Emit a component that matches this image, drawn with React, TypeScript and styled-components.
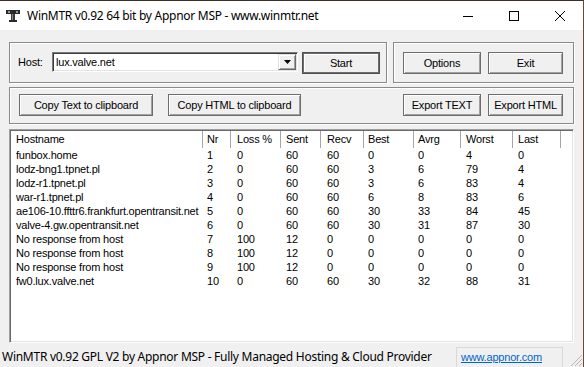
import React from 'react';
import styled, { createGlobalStyle } from 'styled-components';

const Global = createGlobalStyle`
  html, body { margin: 0; padding: 0; background: #f0f0f0; }
  body { width: 584px; height: 367px; overflow: hidden; }
`;

const Window = styled.div`
  width: 584px;
  height: 367px;
  box-sizing: border-box;
  border-top: 1px solid #3b2f28;
  border-right: 1px solid #6b4a33;
  background: #f0f0f0;
  display: flex;
  flex-direction: column;
  font-family: "Liberation Sans", Arial, sans-serif;
  font-size: 11px;
  letter-spacing: -0.2px;
  color: #000;
`;

const TitleBar = styled.div`
  height: 29px;
  flex: none;
  background: #fff;
  display: flex;
  align-items: center;
`;

const TitleIcon = styled.svg`
  width: 16px;
  height: 16px;
  margin-left: 5px;
  flex: none;
`;

const TitleText = styled.div`
  margin-left: 6px;
  flex: 1;
  font-family: "Noto Sans", "Open Sans", sans-serif;
  font-size: 12px;
  letter-spacing: -0.28px;
  color: #000;
`;

const CaptionButton = styled.div`
  width: 46px;
  height: 29px;
  display: flex;
  align-items: center;
  justify-content: center;
`;

const Content = styled.div`
  flex: 1;
  display: flex;
  flex-direction: column;
  padding: 0 9px;
  min-height: 0;
`;

const TopRow = styled.div`
  display: flex;
  gap: 6px;
  margin-top: 12px;
`;

const Group = styled.div<{ $w?: number; $h: number; $pt: number; $pl: number; $pr: number }>`
  box-sizing: border-box;
  ${(p) => (p.$w ? `width: ${p.$w}px;` : 'flex: 1;')}
  height: ${(p) => p.$h}px;
  border: 1px solid #8a8a8a;
  box-shadow: inset 1px 1px #ffffff, 1px 1px #ffffff;
  display: flex;
  align-items: flex-start;
  padding: ${(p) => `${p.$pt}px ${p.$pr}px 0 ${p.$pl}px`};
`;

const HostLabel = styled.div`
  width: 34px;
  height: 20px;
  line-height: 20px;
  flex: none;
`;

const Combo = styled.div`
  box-sizing: border-box;
  width: 246px;
  height: 20px;
  margin-right: 4px;
  background: #fff;
  border-style: solid;
  border-width: 1px;
  border-color: #7a7a7a #ffffff #ffffff #7a7a7a;
  box-shadow: inset 1px 1px #3c3c3c, inset -1px -1px #e3e3e3;
  display: flex;
  align-items: center;
  padding: 0 1px 0 3px;
`;

const ComboText = styled.div`
  flex: 1;
  line-height: 16px;
`;

const ComboArrow = styled.div`
  box-sizing: border-box;
  width: 18px;
  height: 16px;
  background: #f0f0f0;
  border-style: solid;
  border-width: 1px;
  border-color: #e3e3e3 #696969 #696969 #e3e3e3;
  box-shadow: inset 1px 1px #fff, inset -1px -1px #a0a0a0;
  display: flex;
  align-items: center;
  justify-content: center;
`;

const Button = styled.div<{ $w: number; $default?: boolean }>`
  box-sizing: border-box;
  width: ${(p) => p.$w}px;
  height: 22px;
  flex: none;
  background: #f0f0f0;
  border: 1px solid ${(p) => (p.$default ? '#505050' : '#6d6d6d')};
  box-shadow: ${(p) =>
    p.$default
      ? 'inset 1px 1px #6d6d6d, inset -1px -1px #6d6d6d, inset 2px 2px #fff'
      : 'inset 1px 1px #ffffff, inset -1px -1px #a0a0a0'};
  display: flex;
  align-items: center;
  justify-content: center;
  white-space: nowrap;
`;

const Gap = styled.div<{ $w: number }>`
  width: ${(p) => p.$w}px;
  flex: none;
`;

const Spacer = styled.div`
  flex: 1;
`;

const SecondRow = styled.div`
  margin-top: 4px;
  display: flex;
`;

const List = styled.div`
  margin-top: 5px;
  flex: 1;
  min-height: 0;
  box-sizing: border-box;
  background: #fff;
  border-style: solid;
  border-width: 1px;
  border-color: #a0a0a0 #ffffff #ffffff #a0a0a0;
  box-shadow: inset 1px 1px #696969, inset -1px -1px #e3e3e3;
  padding: 1px;
  overflow: hidden;
`;

const GridRow = styled.div<{ $cols: string; $h: number }>`
  display: grid;
  grid-template-columns: ${(p) => p.$cols};
  height: ${(p) => p.$h}px;
  line-height: ${(p) => p.$h}px;
`;

const HeaderCell = styled.div<{ $pad: number; $last?: boolean }>`
  box-sizing: border-box;
  padding-left: ${(p) => p.$pad}px;
  border-right: ${(p) => (p.$last ? 'none' : '1px solid #a6a6a6')};
  white-space: nowrap;
  overflow: hidden;
`;

const Cell = styled.div<{ $pad: number }>`
  box-sizing: border-box;
  padding-left: ${(p) => p.$pad}px;
  white-space: nowrap;
  overflow: hidden;
`;

const StatusBar = styled.div`
  height: 24px;
  flex: none;
  display: flex;
  align-items: flex-end;
`;

const StatusMain = styled.div`
  flex: 1;
  height: 20px;
  line-height: 20px;
  padding-left: 2px;
  white-space: nowrap;
  font-family: "Noto Sans", "Open Sans", sans-serif;
  font-size: 12px;
  letter-spacing: -0.27px;
`;

const StatusPanel = styled.div`
  box-sizing: border-box;
  width: 107px;
  height: 20px;
  line-height: 19px;
  border: 1px solid #d9d9d9;
  border-bottom: none;
  padding-left: 4px;
  white-space: nowrap;
`;

const Link = styled.span`
  color: #0066cc;
  text-decoration: underline;
`;

const Grip = styled.svg`
  width: 20px;
  height: 20px;
  flex: none;
`;

const COLS = [
  { label: 'Hostname', w: 192, pad: 5 },
  { label: 'Nr', w: 28, pad: 4 },
  { label: 'Loss %', w: 50, pad: 6 },
  { label: 'Sent', w: 40, pad: 5 },
  { label: 'Recv', w: 43, pad: 6 },
  { label: 'Best', w: 50, pad: 4 },
  { label: 'Avrg', w: 47, pad: 4 },
  { label: 'Worst', w: 52, pad: 5 },
  { label: 'Last', w: 48, pad: 5 },
];

const ROWS: (string | number)[][] = [
  ['funbox.home', 1, 0, 60, 60, 0, 0, 4, 0],
  ['lodz-bng1.tpnet.pl', 2, 0, 60, 60, 3, 6, 79, 4],
  ['lodz-r1.tpnet.pl', 3, 0, 60, 60, 3, 6, 83, 4],
  ['war-r1.tpnet.pl', 4, 0, 60, 60, 6, 8, 83, 6],
  ['ae106-10.ffttr6.frankfurt.opentransit.net', 5, 0, 60, 60, 30, 33, 84, 45],
  ['valve-4.gw.opentransit.net', 6, 0, 60, 60, 30, 31, 87, 30],
  ['No response from host', 7, 100, 12, 0, 0, 0, 0, 0],
  ['No response from host', 8, 100, 12, 0, 0, 0, 0, 0],
  ['No response from host', 9, 100, 12, 0, 0, 0, 0, 0],
  ['fw0.lux.valve.net', 10, 0, 60, 60, 30, 32, 88, 31],
];

const colTemplate = COLS.map((c) => `${c.w}px`).join(' ') + ' 1fr';

export default function App() {
  return (
    <>
      <Global />
      <Window>
        <TitleBar>
          <TitleIcon viewBox="0 0 16 16">
            <rect x="1" y="2" width="14" height="4" fill="#2a2a2a" />
            <rect x="3" y="3" width="2" height="2" fill="#9a9a9a" />
            <rect x="11" y="3" width="2" height="2" fill="#9a9a9a" />
            <rect x="6" y="6" width="4" height="6" fill="#3a3a3a" />
            <rect x="7" y="6" width="1" height="6" fill="#8a8a8a" />
            <rect x="4" y="12" width="8" height="2" fill="#2a2a2a" />
          </TitleIcon>
          <TitleText>WinMTR v0.92 64 bit by Appnor MSP - www.winmtr.net</TitleText>
          <CaptionButton>
            <svg width="10" height="10" viewBox="0 0 10 10">
              <line x1="0" y1="5.5" x2="10" y2="5.5" stroke="#000" strokeWidth="1" />
            </svg>
          </CaptionButton>
          <CaptionButton>
            <svg width="10" height="10" viewBox="0 0 10 10">
              <rect x="0.5" y="0.5" width="9" height="9" fill="none" stroke="#000" strokeWidth="1" />
            </svg>
          </CaptionButton>
          <CaptionButton>
            <svg width="10" height="10" viewBox="0 0 10 10">
              <path d="M0 0 L10 10 M10 0 L0 10" stroke="#000" strokeWidth="1" />
            </svg>
          </CaptionButton>
        </TitleBar>
        <Content>
          <TopRow>
            <Group $w={378} $h={41} $pt={9} $pl={8} $pr={6}>
              <HostLabel>Host:</HostLabel>
              <Combo>
                <ComboText>lux.valve.net</ComboText>
                <ComboArrow>
                  <svg width="7" height="4" viewBox="0 0 7 4">
                    <path d="M0 0 H7 L3.5 4 Z" fill="#000" />
                  </svg>
                </ComboArrow>
              </Combo>
              <Button $w={78} $default>Start</Button>
            </Group>
            <Group $h={41} $pt={9} $pl={9} $pr={10}>
              <Button $w={78}>Options</Button>
              <Gap $w={7} />
              <Button $w={75}>Exit</Button>
            </Group>
          </TopRow>
          <SecondRow>
            <Group $h={37} $pt={6} $pl={9} $pr={10}>
              <Button $w={134}>Copy Text to clipboard</Button>
              <Gap $w={15} />
              <Button $w={133}>Copy HTML to clipboard</Button>
              <Spacer />
              <Button $w={78}>Export TEXT</Button>
              <Gap $w={7} />
              <Button $w={75}>Export HTML</Button>
            </Group>
          </SecondRow>
          <List>
            <GridRow $cols={colTemplate} $h={17}>
              {COLS.map((c) => (
                <HeaderCell key={c.label} $pad={c.pad}>
                  {c.label}
                </HeaderCell>
              ))}
              <HeaderCell $pad={0} $last />
            </GridRow>
            {ROWS.map((r, i) => (
              <GridRow key={i} $cols={colTemplate} $h={14}>
                {r.map((v, j) => (
                  <Cell key={j} $pad={COLS[j].pad}>
                    {v}
                  </Cell>
                ))}
                <Cell $pad={0} />
              </GridRow>
            ))}
          </List>
        </Content>
        <StatusBar>
          <StatusMain>WinMTR v0.92 GPL V2 by Appnor MSP - Fully Managed Hosting &amp; Cloud Provider</StatusMain>
          <StatusPanel>
            <Link>www.appnor.com</Link>
          </StatusPanel>
          <Grip viewBox="0 0 20 20">
            <path d="M19 8 L8 19 M19 12 L12 19 M19 16 L16 19" stroke="#b8b8b8" strokeWidth="1" />
          </Grip>
        </StatusBar>
      </Window>
    </>
  );
}
